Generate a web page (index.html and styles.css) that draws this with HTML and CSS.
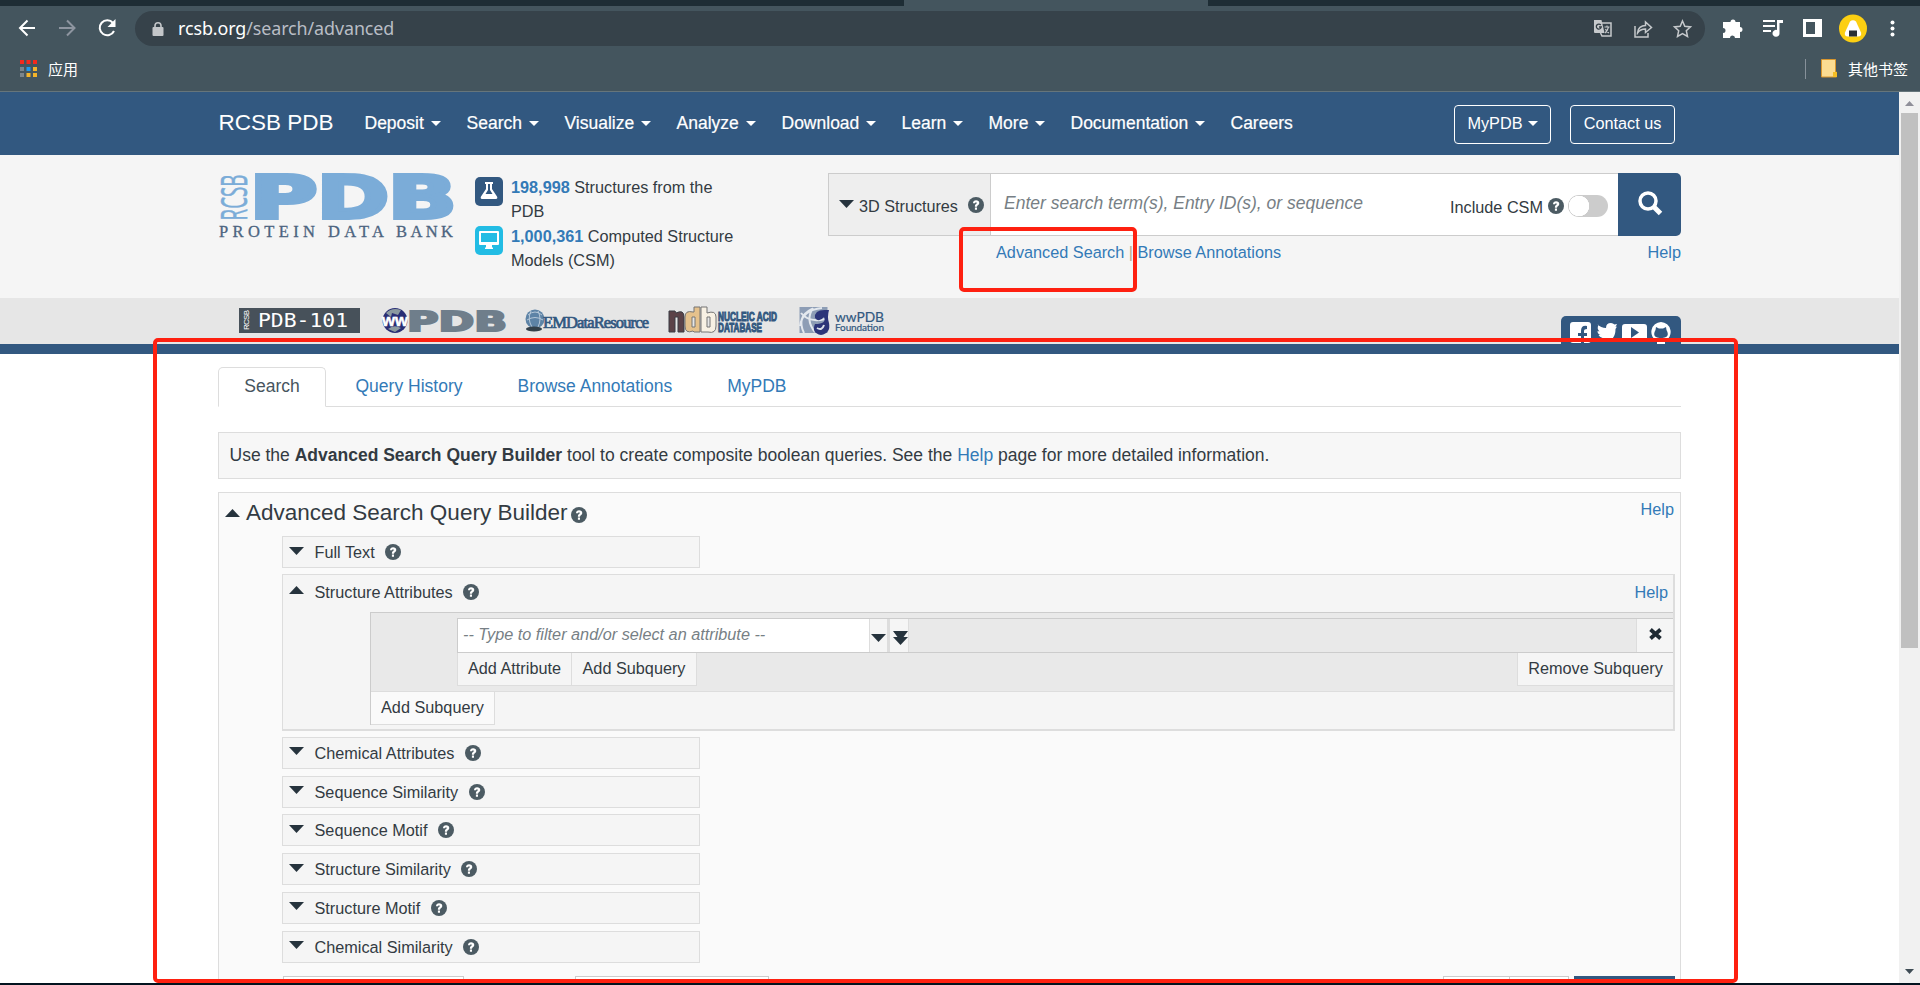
FILE: index.html
```html
<!DOCTYPE html>
<html lang="en">
<head>
<meta charset="utf-8">
<title>RCSB PDB: Advanced Search</title>
<link rel="stylesheet" href="styles.css">
</head>
<body>
<svg class="defs" width="0" height="0">
  <symbol id="q" viewBox="0 0 16 16"><circle cx="8" cy="8" r="8" fill="#4c5b63"/><path d="M5 6.200C5 4.100 6.300 3.200 8.100 3.200s3.200 1 3.200 2.700c0 2.200-2.300 2.100-2.300 3.800H6.900c0-2.600 1.800-2.500 1.800-3.600 0-.5-.3-.8-.7-.8-.6 0-.8.400-.8.900zM6.900 10.600H9v2.100H6.900z" fill="#fff"/></symbol>
  <symbol id="down" viewBox="0 0 15 8"><path d="M0 0h15L7.500 8z" fill="#26333d"/></symbol>
  <symbol id="up" viewBox="0 0 15 8"><path d="M0 8h15L7.500 0z" fill="#26333d"/></symbol>
</svg>

<header class="chrome">
  <div class="strip"><i></i></div>
  <div class="toolbar">
    <svg class="navs" width="100" height="24" viewBox="0 0 100 24" fill="none" stroke="#fff" stroke-width="2">
      <path d="M17 12H2M9.500 4.500L2 12l7.500 7.500"/>
      <path d="M41 12h15M49 4.500l7.500 7.500-7.500 7.500" stroke="#8e95a0"/>
      <path d="M95 7A7.500 7.500 0 1 0 96 15"/><path d="M97.500 3v8h-8z" fill="#fff" stroke="none"/>
    </svg>
    <div class="omni">
      <svg width="12" height="14" viewBox="0 0 12 14"><path d="M3 6V3.800a3 3 0 0 1 6 0V6" fill="none" stroke="#c3c6c9" stroke-width="1.600"/><rect x=".5" y="5" width="11" height="9" rx="1" fill="#c3c6c9"/></svg>
      <span class="url">rcsb.org<em>/search/advanced</em></span>
      <svg class="omni-icons" width="100" height="20" viewBox="0 0 100 20" fill="none" stroke="#c6c9cc" stroke-width="1.500">
        <path d="M9 4h9v13H9l-1.500-3" /><path d="M1 1h7.500l3 13H2q-1 0-1-1z" fill="#c6c9cc" stroke="none"/><path d="M7.800 6a2.500 2.500 0 1 0 .5 2H6" stroke="#333e45" stroke-width="1.300"/><path d="M11.500 8h5M14 6.500V8M15.500 8q-1 4-3.500 6M12.500 10q1 3 3.500 4" stroke-width="1.100"/>
        <path d="M42 7v11h13v-4M44.500 14c0-5 4-7.500 8-7.500V3l6 5.500-6 5V10c-4 0-6 1-8 4z"/>
        <path d="M89.500 2l2.300 5.300 5.700.6-4.200 3.800 1.200 5.700-5-2.900-5 2.900 1.200-5.700-4.200-3.800 5.700-.6z"/>
      </svg>
    </div>
    <svg class="exts" width="190" height="32" viewBox="0 0 190 32" fill="#fff">
      <path d="M6 9h3.500a2.500 2.500 0 1 1 5 0H19v5a2.500 2.500 0 1 1 0 5v6h-5a2.500 2.500 0 0 0-5 0H2v-5a2.500 2.500 0 0 0 0-5V9z"/>
      <path d="M42 8h12M42 13h12M42 18h8" stroke="#fff" stroke-width="2"/><path d="M56 7h6v3h-3.500v10a3.500 3.500 0 1 1-2.500-3z"/>
      <path d="M82 6h19v18H82zM85 9v12h9V9z" fill-rule="evenodd"/>
      <circle cx="132" cy="15.500" r="14" fill="#fccf12"/><path d="M129 8.500q3-2.500 6 0l5 11q1 4-3 4h-10q-4 0-3-4z"/><rect x="128" y="17.500" width="8" height="6" fill="#2a3036"/>
      <circle cx="171.500" cy="9.500" r="2"/><circle cx="171.500" cy="15.500" r="2"/><circle cx="171.500" cy="21.500" r="2"/>
    </svg>
  </div>
  <div class="bookmarks">
    <svg width="17" height="18" viewBox="0 0 17 18"><path d="M0 0h4v4H0zM6.500 0h4v4h-4zM13 0h4v4h-4z" fill="#f5291c"/><path d="M0 7h4v4H0z" fill="#7b858c"/><path d="M6.500 7h4v4h-4z" fill="#1d9af0"/><path d="M13 7h4v4h-4zM6.500 13h4v4h-4zM13 13h4v4h-4z" fill="#f3b42a"/><path d="M0 13h4v4H0z" fill="#7b858c"/></svg>
    <span>应用</span>
    <i class="sep"></i>
    <svg width="16" height="19" viewBox="0 0 16 19"><path d="M.5.500h14v12.500h1v5H.5z" fill="#fbdc92" stroke="#d9962d"/><path d="M12 13h4v5h-4z" fill="#f5bd24"/></svg>
    <span>其他书签</span>
  </div>
</header>

<div class="view">
<div class="page">
  <nav class="topnav">
    <b class="brand">RCSB PDB</b>
    <a class="w1">Deposit<i></i></a><a class="w2">Search<i></i></a><a class="w3">Visualize<i></i></a><a class="w4">Analyze<i></i></a><a class="w5">Download<i></i></a><a class="w6">Learn<i></i></a><a class="w7">More<i></i></a><a class="w8">Documentation<i></i></a><a>Careers</a>
    <span class="btns"><a class="my">MyPDB<i></i></a><a class="contact">Contact us</a></span>
  </nav>

  <section class="head">
    <svg class="logo" width="237" height="66" viewBox="0 0 237 66" fill="#7bacd8">
      <text transform="translate(28 46.500) rotate(-90)" font-family="Open Sans" font-size="37" stroke="#7bacd8" stroke-width=".6" textLength="46" lengthAdjust="spacingAndGlyphs">RCSB</text>
      <g class="heavy">
        <text x="30.700" y="44" textLength="67.600" lengthAdjust="spacingAndGlyphs">P</text>
        <text x="98" y="44" textLength="72" lengthAdjust="spacingAndGlyphs">D</text>
        <text x="169" y="44" textLength="68.600" lengthAdjust="spacingAndGlyphs">B</text>
      </g>
      <text x="0" y="62.500" class="serif" textLength="96">PROTEIN</text>
      <text x="109" y="62.500" class="serif" textLength="56">DATA</text>
      <text x="177" y="62.500" class="serif" textLength="57">BANK</text>
    </svg>
    <div class="stats">
      <svg width="28" height="29" viewBox="0 0 28 29"><rect width="28" height="29" rx="5" fill="#325880"/><path d="M10 5h8v2h-1v5l5 7.500q1 2-1 2.500H7q-2-.5-1-2.500L11 12V7h-1zM13 7v6l-2.500 4h7L15 13V7z" fill="#fff" fill-rule="evenodd"/></svg>
      <p><b>198,998</b> Structures from the PDB</p>
      <svg width="28" height="29" viewBox="0 0 28 29"><rect width="28" height="29" rx="5" fill="#22bce4"/><path d="M5 5h18q1 0 1 1v12q0 1-1 1h-6v2l1 1v1h-8v-1l1-1v-2H5q-1 0-1-1V6q0-1 1-1zM6 7v9h16V7z" fill="#fff" fill-rule="evenodd"/></svg>
      <p><b>1,000,361</b> Computed Structure Models (CSM)</p>
    </div>
    <div class="finder">
      <div class="bar">
        <div class="kind"><svg width="15" height="8"><use href="#down"/></svg><span>3D Structures</span><svg width="16" height="16"><use href="#q"/></svg></div>
        <div class="field"><em>Enter search term(s), Entry ID(s), or sequence</em><span>Include CSM</span><svg width="16" height="16"><use href="#q"/></svg><i class="toggle"></i></div>
        <div class="go"><svg width="25" height="25" viewBox="0 0 25 25" fill="none" stroke="#fff"><circle cx="10" cy="10" r="8" stroke-width="3.500"/><path d="M15.500 15.500l7 7" stroke-width="5"/></svg></div>
      </div>
      <div class="links"><a>Advanced Search</a><s>|</s><a>Browse Annotations</a><a class="end">Help</a></div>
      <div class="mark small"></div>
    </div>
  </section>

  <section class="partners">
    <svg width="660" height="46" viewBox="0 0 660 46">
      <rect x="21" y="10" width="121" height="25" fill="#47515a"/>
      <text transform="translate(31 32) rotate(-90)" font-family="Liberation Sans" font-size="8" fill="#fff" textLength="20">RCSB</text>
      <text x="40" y="29" font-family="DejaVu Sans Mono" font-size="20" fill="#fff" textLength="90" lengthAdjust="spacingAndGlyphs">PDB-101</text>
      <circle cx="177" cy="22.500" r="12.500" fill="#292e75"/><path d="M168 15q6-6 15-3l-3 5-6-2-1 4zM170 31q6-5 13-1l-6 4z" fill="#8b9aa0"/>
      <text x="164" y="28" font-family="Liberation Sans" font-weight="bold" font-size="17" fill="#fff" stroke="#fff" stroke-width=".5" textLength="26" lengthAdjust="spacingAndGlyphs">ww</text>
      <text x="189" y="33" class="grayheavy" textLength="100" lengthAdjust="spacingAndGlyphs">PDB</text>
      <circle cx="317" cy="21" r="9.500" fill="#5d83a6"/><path d="M310 17q7-6 14 0M309 22q8-5 16 0M313 13q-4 8 1 16M320 13q4 8 0 16" stroke="#b5c7d8" fill="none"/><ellipse cx="316" cy="31" rx="8" ry="2.500" fill="#33404a"/>
      <text x="325" y="30" font-family="Liberation Serif" font-size="16.500" fill="#325880" stroke="#325880" stroke-width=".7" textLength="106">EMDataResource</text>
      <path d="M451 13h6l1 2q8-4 8 4v15h-6V19h-3v15h-6z" fill="#5b4248" stroke="#3b3d44"/>
      <path d="M476 9h6v25h-6l-1-1q-8 3-8-5V19q0-7 8-5h1zM474 19v10h3V19z" fill="#e5c18c" stroke="#747474" fill-rule="evenodd"/>
      <path d="M483 9h6v6q9-3 9 4v9q0 8-8 6h-7zM489 19v10h3V19z" fill="#f8f1e4" stroke="#747474" fill-rule="evenodd"/>
      <g font-family="Liberation Sans" font-weight="bold" fill="#325880" stroke="#325880" stroke-width="1"><text x="500" y="23" font-size="12.500" textLength="59" lengthAdjust="spacingAndGlyphs">NUCLEIC ACID</text><text x="500" y="34" font-size="12.500" textLength="44" lengthAdjust="spacingAndGlyphs">DATABASE</text></g>
      <rect x="581.500" y="9" width="28" height="26" fill="#8d9db5"/><g fill="none" stroke="#e3e8ee" stroke-width="2"><path d="M582 28q2-16 22-18M586 35q-8-16 8-24M595 10q-8 12 2 24M583 15q8 10 24 6"/></g><path d="M609 12q-13-1-12 8 4 5 9-1 3 7-9 7-4 9 6 11 10-2 8-12-2-6 0-13z" fill="#2c3579"/><path d="M599 30q5 3 7-3" fill="none" stroke="#dce2eb" stroke-width="2"/>
      <g font-family="Lato" fill="#325880" stroke="#325880" stroke-width=".2"><text x="617" y="24" font-size="13.500" textLength="49" lengthAdjust="spacingAndGlyphs">wwPDB</text><text x="617" y="33" font-size="10" textLength="49">Foundation</text></g>
    </svg>
    <div class="social"><svg width="102" height="22" viewBox="0 0 102 22" fill="#fff">
      <path d="M3 0h15q3 0 3 3v15q0 3-3 3h-4v-7h3v-3h-3V9q0-2 3-2V4q-6-1-6 5v2H8v3h3v7H3q-3 0-3-3V3q0-3 3-3z"/>
      <path d="M27 2q4 4 9 4 0-5 5-5 2 0 3.500 1.500L47 2l-1.500 3L47 4.500 45.500 7q0 12-11 13-5 0-8-2 4 0 6-2-3-1-4-3h2q-3-1-3-4l2 .5q-3-3-1-6.500z"/>
      <path d="M55 2h19q3 0 3 3v11q0 3-3 3H55q-3 0-3-3V5q0-3 3-3zM61 5v11l8-5.500z" fill-rule="evenodd"/>
      <path d="M91 0a10 10 0 0 0-4 19v3h8v-3A10 10 0 0 0 91 0zM86 5l3 1.500h4L96 5l.5 3q4 7-4 8h-3q-8-1-4-8z" fill-rule="evenodd"/>
    </svg></div>
  </section>

  <main>
    <div class="mark big"></div>
    <div class="tabs"><a class="on">Search</a><a class="next">Query History</a><a>Browse Annotations</a><a>MyPDB</a></div>
    <div class="info">Use the <b>Advanced Search Query Builder</b> tool to create composite boolean queries. See the <a>Help</a> page for more detailed information.</div>
    <section class="builder">
      <div class="title"><svg width="15" height="8"><use href="#up"/></svg><h1>Advanced Search Query Builder</h1><svg width="16" height="16"><use href="#q"/></svg><a>Help</a></div>
      <div class="groups">
        <div class="row"><svg width="15" height="8"><use href="#down"/></svg><span>Full Text</span><svg width="16" height="16"><use href="#q"/></svg></div>
        <div class="open">
          <div class="cap"><svg width="15" height="8"><use href="#up"/></svg><span>Structure Attributes</span><svg width="16" height="16"><use href="#q"/></svg><a>Help</a></div>
          <div class="query">
            <div class="sub">
              <div class="attr"><em>-- Type to filter and/or select an attribute --</em><i class="dd"><svg width="15" height="8"><use href="#down"/></svg></i><i class="dd two"><svg width="15" height="14" viewBox="0 0 15 14"><path d="M0 0h15l-4.500 6H15L7.500 14 0 6h4.500z" fill="#26333d"/></svg></i><i class="x"><svg width="13" height="12" viewBox="0 0 13 12"><path d="M1.500 1.500l10 9M11.500 1.500l-10 9" stroke="#1f2a33" stroke-width="3.800"/></svg></i></div>
              <div class="acts"><a class="aa">Add Attribute</a><a class="as">Add Subquery</a><a class="rs">Remove Subquery</a></div>
            </div>
            <a class="addsub">Add Subquery</a>
          </div>
        </div>
        <div class="row"><svg width="15" height="8"><use href="#down"/></svg><span>Chemical Attributes</span><svg width="16" height="16"><use href="#q"/></svg></div>
        <div class="row"><svg width="15" height="8"><use href="#down"/></svg><span>Sequence Similarity</span><svg width="16" height="16"><use href="#q"/></svg></div>
        <div class="row"><svg width="15" height="8"><use href="#down"/></svg><span>Sequence Motif</span><svg width="16" height="16"><use href="#q"/></svg></div>
        <div class="row"><svg width="15" height="8"><use href="#down"/></svg><span>Structure Similarity</span><svg width="16" height="16"><use href="#q"/></svg></div>
        <div class="row"><svg width="15" height="8"><use href="#down"/></svg><span>Structure Motif</span><svg width="16" height="16"><use href="#q"/></svg></div>
        <div class="row"><svg width="15" height="8"><use href="#down"/></svg><span>Chemical Similarity</span><svg width="16" height="16"><use href="#q"/></svg></div>
        <div class="foot"><i class="f1"></i><i class="f2"></i><i class="f3"></i><i class="f4"></i><i class="f5"></i></div>
      </div>
    </section>
  </main>
</div>
<aside class="scroll"><svg width="9" height="5" viewBox="0 0 9 5"><path d="M0 5h9L4.500 0z" fill="#8f8f99"/></svg><i></i><svg class="dn" width="9" height="5" viewBox="0 0 9 5"><path d="M0 0h9L4.500 5z" fill="#3f4c55"/></svg></aside>
</div>
</body>
</html>
```
FILE: styles.css
```css
* { box-sizing: border-box; }
body { margin: 0; width: 1920px; height: 985px; overflow: hidden; background: #03131f; font: 16.25px/24px "Liberation Sans", Arial, sans-serif; color: #333b42; }
.defs { position: absolute; }
svg { display: block; flex: none; }
a { color: #337ab7; }
p, h1 { margin: 0; }

.chrome { height: 92px; background: #44555e; border-bottom: 1px solid #66757b; font-family: "Noto Sans", "Noto Sans CJK SC", sans-serif; color: #fff; }
.strip { height: 6px; background: #1e2d35; padding-left: 904px; }
.strip i { display: block; width: 304px; height: 6px; background: #44555e; }
.toolbar { display: flex; align-items: center; height: 45px; padding-left: 18px; }
.navs { margin: -1px 17px 0 0; }
.omni { display: flex; align-items: center; width: 1570px; height: 35px; padding: 0 12px 0 17px; border-radius: 18px; background: #36424a; }
.url { margin: -2px 0 0 14px; font-size: 17.9px; letter-spacing: -.1px; }
.url em { font-style: normal; color: #b9bdc5; }
.omni-icons { margin-left: auto; }
.exts { margin-left: 16px; }
.bookmarks { display: flex; align-items: center; height: 37px; padding: 0 12px 2px 20px; font: 15px/20px "Noto Sans CJK SC", sans-serif; }
.bookmarks span { margin-left: 11px; }
.sep { width: 1px; height: 20px; margin: 0 15px 0 auto; background: #87919a; }

.view { display: flex; height: 891px; overflow: hidden; }
.page { width: 1899px; background: #fff; }
.scroll { display: flex; flex-direction: column; align-items: center; width: 21px; padding: 9px 1px 9px 0; background: #f1f1f1; }
.scroll i { width: 17px; height: 535px; margin-top: 7px; background: #c0c0c0; }
.scroll .dn { margin-top: auto; }

.topnav { display: flex; align-items: center; height: 63px; padding: 0 224px 2px 218.500px; background: #325880; font-size: 17.5px; }
.topnav a { color: #fff; white-space: nowrap; -webkit-text-stroke: .2px #fff; }
.topnav i { display: inline-block; margin: 0 0 3px 7px; border: 5px solid transparent; border-top-color: #fff; border-bottom: 0; }
.brand { width: 146px; font-size: 22.5px; font-weight: 400; color: #fff; }
.w1 { width: 102px; } .w2 { width: 98px; } .w3 { width: 112px; } .w4 { width: 105px; } .w5 { width: 120px; } .w6 { width: 87px; } .w7 { width: 82px; } .w8 { width: 160px; }
.btns { display: flex; gap: 19px; margin: 4px 0 0 auto; font-size: 16.25px; }
.btns a { height: 39px; line-height: 35px; border: 1px solid #fff; border-radius: 4px; text-align: center; -webkit-text-stroke: 0; }
.btns i { margin-left: 5px; }
.my { width: 97px; } .contact { width: 105px; }

.head { display: flex; height: 143px; padding: 18px 0 0 219px; background: #f5f5f5; }
.logo { margin-top: 1px; overflow: visible; }
.heavy { font: bold 58px "DejaVu Sans"; stroke: #7bacd8; stroke-width: 4px; }
.serif { font: 16.500px "Liberation Serif"; fill: #4c6480; stroke: #4c6480; stroke-width: .3px; }
.stats { display: grid; grid-template-columns: 36px 230px; grid-auto-rows: 49px; align-content: start; margin: 4px 0 0 19px; }
.stats b { color: #337ab7; }
.stats p { margin-top: -2px; }
.finder { position: relative; width: 853px; margin-left: 87px; }
.bar { display: flex; height: 63px; }
.kind { display: flex; align-items: center; width: 162px; padding: 1px 0 0 10px; border: 1px solid #ccc; border-right: 0; background: #eee; }
.kind svg:first-child { margin-top: -2px; }
.kind span { margin: 2px 10px 0 5px; font-size: 16.2px; }
.field { display: flex; align-items: center; flex: 1; padding: 2px 10px 0 13px; border: 1px solid #ccc; border-right: 0; background: #fff; }
.field em { margin-top: -5px; font-size: 17.5px; color: #777f85; }
.field span { margin: 3px 5px 0 auto; font-size: 16.25px; }
.toggle { width: 40px; height: 22px; margin-left: 4px; border-radius: 11px; background: radial-gradient(circle at 11px 11px, #fff 10px, #ccc 10.5px); }
.go { display: flex; align-items: center; justify-content: center; width: 63px; padding: 0 0 2px 1px; border-radius: 0 5px 5px 0; background: #325880; }
.links { display: flex; padding: 4px 0 0 168px; }
.links s { margin: 0 4.500px; color: #b9a890; text-decoration: none; }
.end { margin-left: auto; }
.mark { position: absolute; border: 4px solid #fe2010; border-radius: 5px; z-index: 3; pointer-events: none; }
.small { left: 131px; top: 54px; width: 178px; height: 65px; }

.partners { display: flex; height: 56px; padding-left: 218px; background: #e6e6e6; border-bottom: 10px solid #325880; }
.partners > svg { overflow: visible; }
.grayheavy { font: bold 27px "DejaVu Sans"; fill: #6f7e8b; stroke: #6f7e8b; stroke-width: 2px; }
.social { width: 120px; height: 28px; margin: 18px 0 0 683px; padding: 6px 0 0 9px; border-radius: 5px 5px 0 0; background: #325880; }

main { position: relative; padding: 13px 218px 0; }
.big { left: 153px; top: -16px; width: 1585px; height: 645px; }
.tabs { display: flex; gap: 2px; height: 40px; border-bottom: 1px solid #ddd; font-size: 17.5px; line-height: 36px; }
.tabs a { height: 40px; padding: 0 25.500px; border: 1px solid transparent; }
.tabs .next { margin-left: 1px; }
.tabs .on { width: 108px; padding: 0; text-align: center; color: #47555e; border-color: #ddd; border-bottom-color: #fff; border-radius: 5px 5px 0 0; background: #fff; }
.info { width: 1463px; height: 47px; margin-top: 25px; padding-left: 10.500px; border: 1px solid #ddd; background: #f7f7f7; font-size: 17.5px; line-height: 44px; white-space: nowrap; }
.builder { width: 1463px; height: 500px; margin-top: 13px; padding-left: 63px; border: 1px solid #ddd; background: #fafafa; }
.title { display: flex; align-items: center; height: 43px; margin-left: -57px; padding-right: 6px; }
.title h1 { margin: -3px 4px 0 6px; font-size: 22.5px; font-weight: 400; }
.title svg { margin-top: -3px; } .title h1 + svg { margin-top: 0; }
.title a { margin: -11px 0 0 auto; }
.groups { display: flex; flex-direction: column; }
.row { display: flex; align-items: center; width: 418px; height: 32px; margin-bottom: 6.8px; padding-left: 6px; border: 1px solid #ddd; background: #f5f5f5; }
.row svg, .cap svg { margin-top: -3px; }
.row span, .cap span { margin: 0 10.500px 0 10.500px; }
.row span + svg, .cap span + svg { margin-top: 0; }
.open { width: 1393px; height: 157px; margin-bottom: 6px; border: 1px solid #ddd; border-width: 1px 2px 2px 1px; background: #f5f5f5; margin-top: -1px; }
.cap { display: flex; align-items: center; height: 37px; padding: 0 5px 3px 6px; }
.cap a { margin: 1px 0 0 auto; }
.query { margin-left: 87px; border: solid #ccc; border-width: 1px 0 0 1px; }
.sub { height: 79px; padding: 5px 0 0 86px; border-bottom: 1px solid #ddd; background: #e9e9e9; }
.attr { display: flex; height: 35px; border: 1px solid #ccc; border-right: 0; }
.attr em { width: 411px; padding-left: 5px; line-height: 31px; background: #fff; color: #777f85; font-size: 16.25px; }
.dd { display: flex; align-items: center; justify-content: center; width: 19px; padding-top: 6px; background: #f5f5f5; border: solid #ddd; border-width: 0 1px; }
.two { width: 21px; border-left-width: 2px; padding: 5px 0 0 3px; }
.x { display: flex; align-items: center; width: 37px; margin-left: auto; padding: 0 0 2px 12px; background: #f5f5f5; border-left: 1px solid #ddd; }
.acts { display: flex; height: 33px; }
.acts a, .addsub { display: block; height: 33px; line-height: 31px; text-align: center; color: #333b42; background: #f5f5f5; border: solid #ddd; border-width: 0 1px 1px 0; }
.aa { width: 115px; } .acts .aa { border-left-width: 1px; }
.as { width: 125px; }
.acts .rs { width: 156px; margin-left: auto; border-width: 0 0 1px 1px; }
.addsub { width: 124px; background: #fafafa; }
.foot { display: flex; height: 20px; margin-top: 6px; }
.foot i { border: 1px solid #ccc; background: #fff; }
.f1 { width: 181px; margin-left: 1px; } .f2 { width: 194px; margin-left: 111px; } .f3 { width: 67px; margin-left: 674px; } .f4 { width: 60px; margin-left: -1px; }
.foot .f5 { width: 101px; margin-left: 5px; background: #325880; border-color: #325880; }
```
